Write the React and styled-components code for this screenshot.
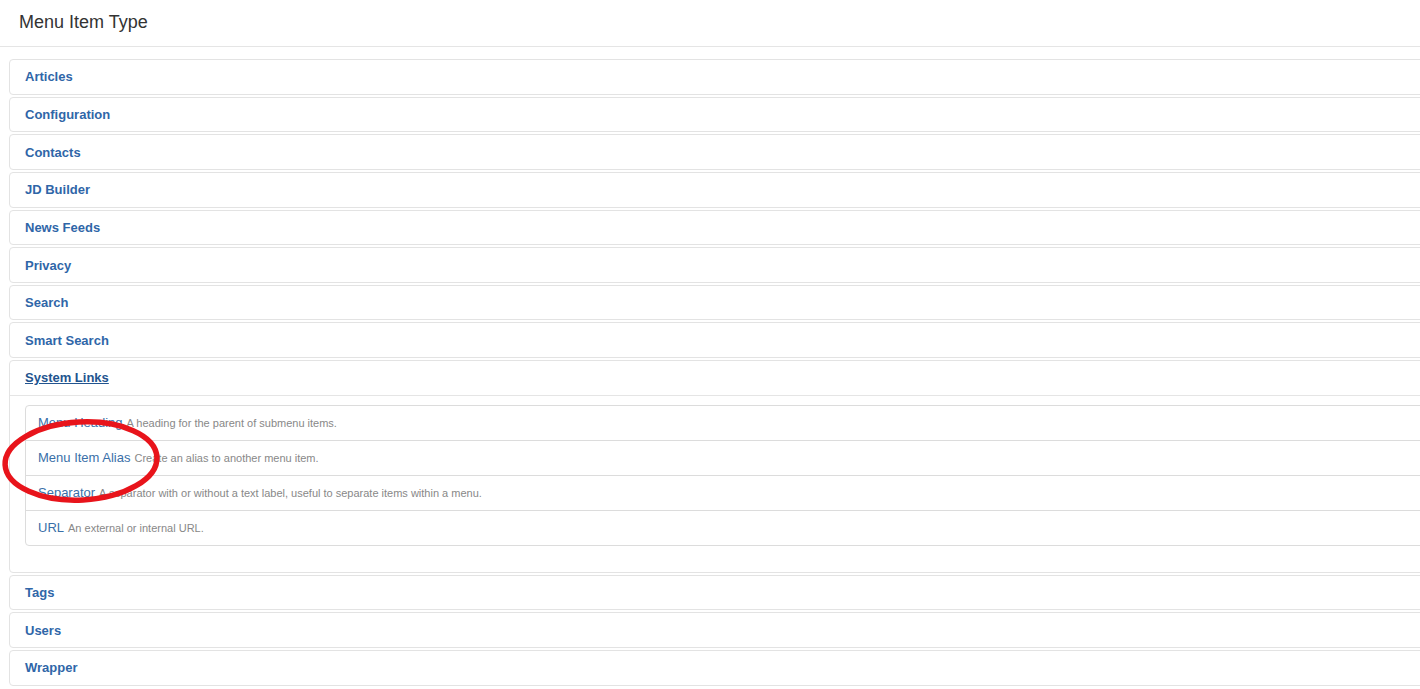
import React from "react";
import styled, { createGlobalStyle } from "styled-components";

const Global = createGlobalStyle`
  html, body { margin: 0; padding: 0; background: #fff; overflow: hidden; }
  body { font-family: "Liberation Sans", Arial, sans-serif; color: #333; }
`;

const Page = styled.div`
  position: relative;
  width: 1420px;
  height: 689px;
  overflow: hidden;
`;

const Header = styled.div`
  height: 46px;
  border-bottom: 1px solid #e5e5e5;
  padding-left: 19px;
  display: flex;
  align-items: center;
`;

const Title = styled.h3`
  margin: 0;
  font-size: 18px;
  font-weight: normal;
  color: #333;
  position: relative;
  top: -1px;
`;

const Accordion = styled.div`
  padding: 12px 0 0 9px;
  margin-right: -30px;
`;

const Panel = styled.div`
  border: 1px solid #e3e3e3;
  border-radius: 4px;
  margin-bottom: 2px;
  background: #fff;
`;

const PanelHeading = styled.div`
  height: 33.65px;
  padding: 0 15px;
  display: flex;
  align-items: center;
  border-bottom: ${(p) => (p.$open ? "1px solid #e5e5e5" : "none")};
`;

const PanelLink = styled.a`
  font-size: 13px;
  font-weight: bold;
  color: ${(p) => (p.$open ? "#22548f" : "#2f66a8")};
  text-decoration: ${(p) => (p.$open ? "underline" : "none")};
  cursor: pointer;
`;

const PanelBody = styled.div`
  padding: 9px 0 26px 15px;
`;

const List = styled.ul`
  list-style: none;
  margin: 0;
  padding: 0;
  border: 1px solid #dcdcdc;
  border-radius: 4px;
`;

const Item = styled.li`
  height: 34px;
  padding-left: 12px;
  display: flex;
  align-items: center;
  border-top: ${(p) => (p.$first ? "none" : "1px solid #dcdcdc")};
  white-space: nowrap;
`;

const ItemLink = styled.a`
  font-size: 13px;
  color: #3a6fa8;
  text-decoration: none;
  margin-right: 4px;
`;

const ItemDesc = styled.small`
  font-size: 11px;
  color: #888;
`;

const Annotation = styled.svg`
  position: absolute;
  left: 0;
  top: 414px;
  pointer-events: none;
`;

const groups = [
  "Articles",
  "Configuration",
  "Contacts",
  "JD Builder",
  "News Feeds",
  "Privacy",
  "Search",
  "Smart Search",
  "System Links",
  "Tags",
  "Users",
  "Wrapper",
];

const systemLinks = [
  ["Menu Heading", "A heading for the parent of submenu items."],
  ["Menu Item Alias", "Create an alias to another menu item."],
  ["Separator", "A separator with or without a text label, useful to separate items within a menu."],
  ["URL", "An external or internal URL."],
];

export default function App() {
  return (
    <Page>
      <Global />
      <Header>
        <Title>Menu Item Type</Title>
      </Header>
      <Accordion>
        {groups.map((g) => {
          const open = g === "System Links";
          return (
            <Panel key={g}>
              <PanelHeading $open={open}>
                <PanelLink $open={open}>{g}</PanelLink>
              </PanelHeading>
              {open && (
                <PanelBody>
                  <List>
                    {systemLinks.map(([t, d], i) => (
                      <Item key={t} $first={i === 0}>
                        <ItemLink>{t}</ItemLink>
                        <ItemDesc>{d}</ItemDesc>
                      </Item>
                    ))}
                  </List>
                </PanelBody>
              )}
            </Panel>
          );
        })}
      </Accordion>
      <Annotation width="170" height="95" viewBox="0 0 170 95">
        <ellipse
          cx="81"
          cy="47"
          rx="76"
          ry="39"
          transform="rotate(-3 81 47)"
          fill="none"
          stroke="#e8141b"
          strokeWidth="5.5"
        />
      </Annotation>
    </Page>
  );
}
